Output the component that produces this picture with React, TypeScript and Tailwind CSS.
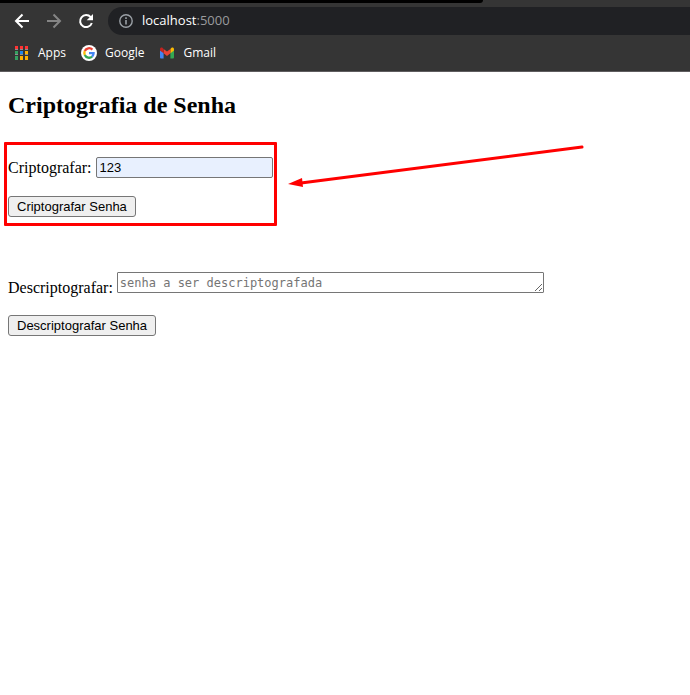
import React from "react";

function BackIcon() {
  return (
    <svg className="h-4 w-4" viewBox="0 0 16 16" fill="none" stroke="#ffffff" strokeWidth="2">
      <path d="M15 8H2.5M8.5 1.5L2 8l6.5 6.5" />
    </svg>
  );
}

function ForwardIcon() {
  return (
    <svg className="h-4 w-4" viewBox="0 0 16 16" fill="none" stroke="#858585" strokeWidth="2">
      <path d="M1 8h12.500M7.500 1.500L14 8l-6.500 6.500" />
    </svg>
  );
}

function ReloadIcon() {
  return (
    <svg className="h-4 w-4" viewBox="0 0 16 16">
      <path d="M12.700 4.200A6 6 0 1 0 13.800 10" fill="none" stroke="#ffffff" strokeWidth="2" />
      <path d="M15 1v6.300H8.700z" fill="#ffffff" />
    </svg>
  );
}

function InfoIcon() {
  return (
    <svg className="h-4 w-4 shrink-0" viewBox="0 0 16 16" fill="none" stroke="#9aa0a6">
      <circle cx="8" cy="8" r="6.2" strokeWidth="1.4" />
      <path d="M8 7v4.500M8 4.300v1.600" strokeWidth="1.600" />
    </svg>
  );
}

const tiles = [
  ["#ff3333", "#ff3333", "#ff3333"],
  ["#34a060", "#2186eb", "#ffaf00"],
  ["#34a060", "#ffaf00", "#ffaf00"],
];

function AppsIcon() {
  return (
    <svg className="h-4 w-4" viewBox="0 0 16 16" shapeRendering="crispEdges">
      {tiles.map((row, r) =>
        row.map((color, c) => (
          <g key={`${r}-${c}`}>
            <rect x={1 + c * 5} y={1 + r * 5} width="3" height="3" fill={color} />
            <rect x={1 + c * 5} y={4 + r * 5} width="3" height="1" fill={r < 2 ? "#8f8f8f" : color} />
          </g>
        )),
      )}
    </svg>
  );
}

function GoogleIcon() {
  return (
    <svg className="h-4 w-4" viewBox="0 0 16 16">
      <circle cx="8" cy="8" r="8" fill="#ffffff" />
      <g fill="none" strokeWidth="2.300">
        <path d="M11.400 4.600A4.700 4.700 0 0 0 3.800 6" stroke="#ea4335" />
        <path d="M3.800 6a4.700 4.700 0 0 0 0 4" stroke="#fbbc05" />
        <path d="M3.800 10a4.700 4.700 0 0 0 7.300 1.600" stroke="#34a853" />
        <path d="M11.100 11.600A4.700 4.700 0 0 0 12.600 8.100H8" stroke="#4285f4" />
      </g>
    </svg>
  );
}

function GmailIcon() {
  return (
    <svg className="h-4 w-4" viewBox="0 0 16 16">
      <path d="M1 5v7.500a1 1 0 0 0 1 1h2.600V7.500z" fill="#4285f4" />
      <path d="M15 5v7.500a1 1 0 0 1-1 1h-2.600V7.500z" fill="#34a853" />
      <path d="M11.400 4v4.300L15 5.600V4.200c0-1.500-1.600-2-2.700-1.200z" fill="#fbbc04" />
      <path d="M4.600 8.300V4L8 6.500 11.400 4v4.300L8 11z" fill="#ea4335" />
      <path d="M1 4.200v1.400l3.600 2.700V4L3.700 3C2.600 2.200 1 2.700 1 4.200z" fill="#c5221f" />
    </svg>
  );
}

const bookmarks = [
  { label: "Apps", href: "#apps", Icon: AppsIcon },
  { label: "Google", href: "#google", Icon: GoogleIcon },
  { label: "Gmail", href: "#gmail", Icon: GmailIcon },
];

function BrowserBar() {
  return (
    <header className="border-b border-[#5f5d5f] bg-[#353535] font-['Open_Sans','Noto_Sans',sans-serif] text-white">
      <div className="h-[3px] w-[70%] rounded-br-sm bg-black" />
      <div className="flex items-center pt-1 pl-3.5">
        <nav className="flex items-center gap-4" aria-label="Navegação">
          <button type="button" aria-label="Voltar"><BackIcon /></button>
          <button type="button" aria-label="Avançar"><ForwardIcon /></button>
          <button type="button" aria-label="Recarregar"><ReloadIcon /></button>
        </nav>
        <div className="ml-3.5 flex h-7 flex-1 items-center gap-2 rounded-l-full bg-[#202124] pl-2.5 text-[13px]">
          <InfoIcon />
          <span>localhost<span className="text-[#9a9b9d]">:5000</span></span>
        </div>
      </div>
      <nav className="flex h-9 items-center gap-[15px] pl-3.5 text-xs" aria-label="Favoritos">
        {bookmarks.map(({ label, href, Icon }) => (
          <a key={label} href={href} className="flex items-center gap-2">
            <Icon />
            {label}
          </a>
        ))}
      </nav>
    </header>
  );
}

function SubmitButton({ children }: { children: React.ReactNode }) {
  return (
    <button
      type="button"
      className="block h-[21px] rounded-[3px] border border-[#767676] bg-[#efefef] px-2 font-['Liberation_Sans',Arial,sans-serif] text-[13px] leading-4"
    >
      {children}
    </button>
  );
}

function Annotation() {
  return (
    <div className="pointer-events-none" aria-hidden="true">
      <div className="absolute -top-[15px] -right-1 -bottom-[9px] -left-1 rounded-[1px] border-3 border-[#ff0000]" />
      <svg className="absolute -top-[15px] left-full ml-3 h-12 w-[300px]" viewBox="0 0 300 48">
        <path d="M16 41L297 5" stroke="#ff0000" strokeWidth="3" strokeLinecap="round" />
        <path d="M3 42L17 36L18 45z" fill="#ff0000" />
      </svg>
    </div>
  );
}

export default function App() {
  return (
    <div className="min-h-screen bg-white text-black">
      <BrowserBar />
      <main className="px-2 pt-5 font-['Liberation_Serif','Times_New_Roman',serif] text-base">
        <h2 className="text-2xl leading-[26px] font-bold">Criptografia de Senha</h2>
        <form className="relative mt-[39px] w-fit">
          <div className="flex h-[21px] items-center gap-1">
            <label htmlFor="encrypt" className="leading-5">Criptografar:</label>
            <input
              id="encrypt"
              type="text"
              defaultValue="123"
              className="h-[21px] w-[177px] rounded-[2px] border border-[#767676] bg-[#e8f0fe] px-[3px] font-['Liberation_Sans',Arial,sans-serif] text-[13px]"
            />
          </div>
          <div className="mt-[18px]">
            <SubmitButton>Criptografar Senha</SubmitButton>
          </div>
          <Annotation />
        </form>
        <form className="mt-[55px]">
          <div className="flex items-start gap-1">
            <label htmlFor="decrypt" className="pt-1">Descriptografar:</label>
            <textarea
              id="decrypt"
              placeholder="senha a ser descriptografada"
              className="h-[21px] w-[427px] resize overflow-hidden rounded-[1px] border border-[#767676] bg-white px-0.5 py-0.5 font-['DejaVu_Sans_Mono',monospace] text-xs leading-4 placeholder:text-[#757575]"
            />
          </div>
          <div className="mt-[15px]">
            <SubmitButton>Descriptografar Senha</SubmitButton>
          </div>
        </form>
      </main>
    </div>
  );
}
